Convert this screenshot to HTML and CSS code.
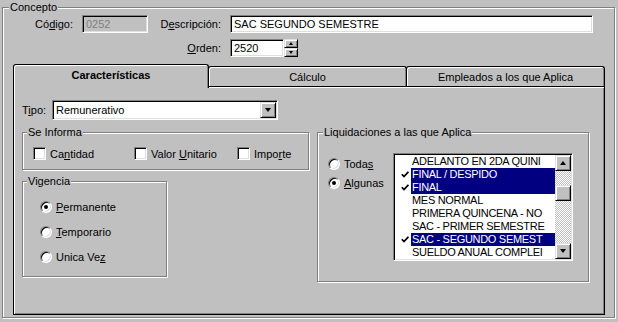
FILE: index.html
```html
<!DOCTYPE html>
<html>
<head>
  <meta charset="utf-8">
  <title>Concepto</title>
  <link rel="stylesheet" href="styles.css">
</head>
<body>
  <fieldset class="group concepto">
    <legend>Concepto</legend>

    <div class="field-row first">
      <label class="lbl lbl-codigo">Có<u>d</u>igo:</label>
      <div class="edit edit-codigo disabled">0252</div>
      <label class="lbl lbl-desc">D<u>e</u>scripción:</label>
      <div class="edit edit-desc">SAC SEGUNDO SEMESTRE</div>
    </div>

    <div class="field-row second">
      <label class="lbl lbl-orden"><u>O</u>rden:</label>
      <div class="edit edit-orden">2520</div>
      <div class="spin">
        <span class="btn spin-btn"><span class="arrow up small"></span></span>
        <span class="btn spin-btn"><span class="arrow down small"></span></span>
      </div>
    </div>

    <div class="tabs">
      <div class="tab-strip">
        <div class="tab active">Características</div>
        <div class="tab">Cálculo</div>
        <div class="tab">Empleados a los que Aplica</div>
      </div>

      <div class="tab-panel">
        <div class="tipo-row">
          <label class="lbl-tipo">T<u>i</u>po:</label>
          <div class="combo">
            <span class="combo-text">Remunerativo</span>
            <span class="btn combo-btn"><span class="arrow down"></span></span>
          </div>
        </div>

        <div class="panel-body">
          <div class="left-col">
            <fieldset class="group se-informa">
              <legend>Se Informa</legend>
              <div class="check-row">
                <span class="check-item ci-1"><span class="checkbox"></span><span>Ca<u>n</u>tidad</span></span>
                <span class="check-item ci-2"><span class="checkbox"></span><span>Valor <u>U</u>nitario</span></span>
                <span class="check-item"><span class="checkbox"></span><span>Impo<u>r</u>te</span></span>
              </div>
            </fieldset>

            <fieldset class="group vigencia">
              <legend>Vigencia</legend>
              <div class="radio-list">
                <div class="radio-item"><span class="radio checked"></span><span><u>P</u>ermanente</span></div>
                <div class="radio-item"><span class="radio"></span><span><u>T</u>emporario</span></div>
                <div class="radio-item"><span class="radio"></span><span>Unica Ve<u>z</u></span></div>
              </div>
            </fieldset>
          </div>

          <fieldset class="group liquidaciones">
            <legend>Liquidaciones a las que Aplica</legend>
            <div class="liq-body">
              <div class="liq-radios">
                <div class="radio-item"><span class="radio"></span><span>Toda<u>s</u></span></div>
                <div class="radio-item"><span class="radio checked"></span><span><u>A</u>lgunas</span></div>
              </div>

              <div class="listbox">
                <ul class="items">
                  <li><span class="mark"></span><span class="text">ADELANTO EN 2DA QUINI</span></li>
                  <li class="sel"><span class="mark"><svg width="8" height="7" viewBox="0 0 8 7"><polyline points="0.8,3.2 3,5.6 7.4,0.8" fill="none" stroke="#000" stroke-width="1.7"/></svg></span><span class="text">FINAL / DESPIDO</span></li>
                  <li class="sel"><span class="mark"><svg width="8" height="7" viewBox="0 0 8 7"><polyline points="0.8,3.2 3,5.6 7.4,0.8" fill="none" stroke="#000" stroke-width="1.7"/></svg></span><span class="text">FINAL</span></li>
                  <li><span class="mark"></span><span class="text">MES NORMAL</span></li>
                  <li><span class="mark"></span><span class="text">PRIMERA QUINCENA - NO</span></li>
                  <li><span class="mark"></span><span class="text">SAC - PRIMER SEMESTRE</span></li>
                  <li class="sel"><span class="mark"><svg width="8" height="7" viewBox="0 0 8 7"><polyline points="0.8,3.2 3,5.6 7.4,0.8" fill="none" stroke="#000" stroke-width="1.7"/></svg></span><span class="text">SAC - SEGUNDO SEMEST</span></li>
                  <li><span class="mark"></span><span class="text">SUELDO ANUAL COMPLEI</span></li>
                </ul>
                <div class="vscroll">
                  <span class="btn sb-btn"><span class="arrow up"></span></span>
                  <span class="track"><span class="btn thumb"></span></span>
                  <span class="btn sb-btn"><span class="arrow down"></span></span>
                </div>
              </div>
            </div>
          </fieldset>
        </div>
      </div>
    </div>
  </fieldset>
</body>
</html>
```

FILE: styles.css
```css
* {
  box-sizing: border-box;
}
body {
  margin: 0;
  width: 618px;
  height: 322px;
  overflow: hidden;
  background-color: #c0c0c0;
  font-family: "Liberation Sans", Arial, sans-serif;
  font-size: 11px;
  color: #000;
}
u {
  text-decoration: underline;
}

/* etched group box */
.group {
  margin: 0;
  padding: 0;
  min-inline-size: 0;
  border: 1px solid #808080;
  box-shadow: inset 1px 1px 0 #fff, 1px 1px 0 #fff;
}
.group legend {
  height: 13px;
  line-height: 13px;
  padding: 0 1px;
  margin-left: 4px;
  background-color: #c0c0c0;
}

/* sunken / raised borders */
.edit, .combo, .listbox, .checkbox, .radio {
  border: 1px solid;
  border-color: #808080 #fff #fff #808080;
  box-shadow: inset 1px 1px 0 #000, inset -1px -1px 0 #dfdfdf;
  background-color: #fff;
}
.btn {
  display: flex;
  align-items: center;
  justify-content: center;
  background-color: #c0c0c0;
  border: 1px solid;
  border-color: #dfdfdf #000 #000 #dfdfdf;
  box-shadow: inset 1px 1px 0 #fff, inset -1px -1px 0 #808080;
}
.arrow {
  width: 1px;
  height: 0;
  border-left: 3px solid transparent;
  border-right: 3px solid transparent;
}
.arrow.down {
  border-top: 4px solid #000;
}
.arrow.up {
  border-bottom: 4px solid #000;
}
.arrow.small {
  border-left-width: 2px;
  border-right-width: 2px;
}
.arrow.small.down {
  border-top-width: 3px;
}
.arrow.small.up {
  border-bottom-width: 3px;
}

/* Concepto */
.concepto {
  width: 613px;
  height: 317px;
  margin: 1px 0 0 2px;
}
.concepto > legend {
  margin-left: 6px;
}
.field-row {
  display: flex;
  align-items: center;
}
.field-row.first {
  margin-top: 1px;
}
.field-row.second {
  margin-top: 6px;
}
.lbl {
  text-align: right;
  padding-right: 9px;
}
.lbl-codigo {
  width: 79px;
}
.lbl-desc {
  width: 82px;
}
.lbl-orden {
  width: 227px;
}
.edit {
  height: 18px;
  padding: 1px 3px;
  line-height: 14px;
  white-space: nowrap;
  overflow: hidden;
}
.edit.disabled {
  background-color: #c0c0c0;
  color: #808080;
}
.edit-codigo {
  width: 66px;
}
.edit-desc {
  width: 363px;
}
.edit-orden {
  width: 54px;
}
.spin {
  width: 14px;
  height: 18px;
  display: flex;
  flex-direction: column;
}
.spin-btn {
  height: 9px;
}

/* tabs */
.tabs {
  margin: 7px 0 0 10px;
  width: 592px;
}
.tab-strip {
  display: flex;
  align-items: flex-end;
  height: 24px;
  margin-bottom: -2px;
}
.tab {
  width: 199px;
  height: 22px;
  margin-left: -1px;
  padding-bottom: 2px;
  display: flex;
  align-items: center;
  justify-content: center;
  background-color: #c0c0c0;
  border: 1px solid #000;
  border-bottom: none;
  border-radius: 3px 3px 0 0;
  box-shadow: inset 1px 1px 0 #fff, inset -1px 0 0 #808080;
}
.tab.active {
  width: 196px;
  height: 24px;
  margin-left: 0;
  padding-bottom: 3px;
  font-weight: bold;
  position: relative;
  z-index: 2;
}
.tab-panel {
  position: relative;
  z-index: 1;
  height: 229px;
  padding-left: 8px;
  background-color: #c0c0c0;
  border: 1px solid #000;
  box-shadow: inset 1px 1px 0 #fff, inset -1px -1px 0 #808080;
}
.tipo-row {
  display: flex;
  align-items: center;
  margin-top: 13px;
}
.lbl-tipo {
  width: 30px;
}
.combo {
  width: 226px;
  height: 20px;
  padding: 1px;
  display: flex;
}
.combo-text {
  flex: 1;
  padding-left: 2px;
  line-height: 16px;
}
.combo-btn {
  width: 16px;
  height: 16px;
}

.panel-body {
  display: flex;
  gap: 8px;
  margin-top: 6px;
}
.left-col {
  width: 287px;
}
.se-informa {
  height: 44px;
}
.check-row {
  display: flex;
  margin: 8px 0 0 10px;
}
.check-item {
  display: flex;
  align-items: center;
  gap: 4px;
  height: 13px;
}
.ci-1 {
  width: 101px;
}
.ci-2 {
  width: 103px;
}
.checkbox {
  width: 13px;
  height: 13px;
  flex: none;
}
.vigencia {
  width: 145px;
  height: 102px;
  margin-top: 5px;
}
.radio-list {
  margin: 6px 0 0 17px;
}
.radio-item {
  display: flex;
  align-items: center;
  height: 25px;
}
.radio {
  width: 12px;
  height: 12px;
  border-radius: 50%;
  margin-right: 4px;
  flex: none;
  display: flex;
  align-items: center;
  justify-content: center;
}
.radio.checked::after {
  content: "";
  width: 4px;
  height: 4px;
  border-radius: 50%;
  background-color: #000;
}

/* Liquidaciones */
.liquidaciones {
  width: 272px;
  height: 156px;
}
.liquidaciones > legend {
  margin-left: 5px;
}
.liq-body {
  display: flex;
  padding-left: 10px;
}
.liq-radios {
  width: 65px;
  margin-top: 15px;
}
.liq-radios .radio-item {
  height: 19px;
}
.listbox {
  width: 180px;
  height: 108px;
  margin-top: 14px;
  padding: 1px;
  display: flex;
}
.items {
  list-style: none;
  margin: 0;
  padding: 0;
  width: 160px;
}
.items li {
  display: flex;
  height: 13px;
  line-height: 13px;
}
.mark {
  width: 16px;
  flex: none;
  display: flex;
  align-items: center;
  padding-left: 6px;
}
.text {
  flex: 1;
  padding-left: 1px;
  white-space: nowrap;
  overflow: hidden;
  letter-spacing: -0.3px;
}
.items li.sel .text {
  background-color: #000080;
  color: #fff;
}
.vscroll {
  width: 16px;
  display: flex;
  flex-direction: column;
}
.sb-btn {
  height: 16px;
  flex: none;
}
.track {
  flex: 1;
  background: repeating-conic-gradient(#c0c0c0 0 25%, #fff 0 50%) 0 0 / 2px 2px;
}
.thumb {
  height: 16px;
  margin-top: 14px;
}
```
